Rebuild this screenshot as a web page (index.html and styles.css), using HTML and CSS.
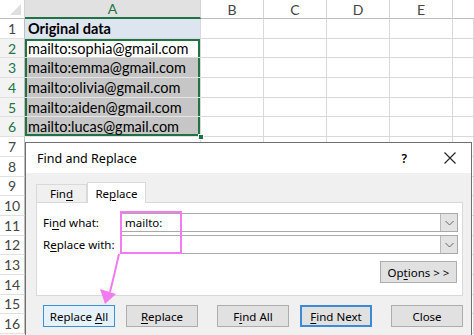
FILE: index.html
```html
<!DOCTYPE html>
<html>
<head>
<meta charset="utf-8">
<link rel="stylesheet" href="styles.css">
</head>
<body>
<div class="page">
  <div class="sheet">
    <div class="corner"><span class="tri"></span></div>
    <div class="ch ch-sel">A</div><div class="ch">B</div><div class="ch">C</div><div class="ch">D</div><div class="ch">E</div><div class="ch ch-last"></div>

    <div class="rh">1</div><div class="c c-a1"><b>Original data</b></div><div class="c"></div><div class="c"></div><div class="c"></div><div class="c"></div><div class="c"></div>
    <div class="rh rh-sel">2</div><div class="c c-txt s-top">mailto:sophia@gmail.com</div><div class="c"></div><div class="c"></div><div class="c"></div><div class="c"></div><div class="c"></div>
    <div class="rh rh-sel">3</div><div class="c c-txt c-gray s-mid">mailto:emma@gmail.com</div><div class="c"></div><div class="c"></div><div class="c"></div><div class="c"></div><div class="c"></div>
    <div class="rh rh-sel">4</div><div class="c c-txt c-gray s-mid">mailto:olivia@gmail.com</div><div class="c"></div><div class="c"></div><div class="c"></div><div class="c"></div><div class="c"></div>
    <div class="rh rh-sel">5</div><div class="c c-txt c-gray s-mid">mailto:aiden@gmail.com</div><div class="c"></div><div class="c"></div><div class="c"></div><div class="c"></div><div class="c"></div>
    <div class="rh rh-sel">6</div><div class="c c-txt c-gray s-bot">mailto:lucas@gmail.com<span class="handle"></span></div><div class="c"></div><div class="c"></div><div class="c"></div><div class="c"></div><div class="c"></div>
    <div class="rh">7</div><div class="c"></div><div class="c"></div><div class="c"></div><div class="c"></div><div class="c"></div><div class="c"></div>
    <div class="rh">8</div><div class="c"></div><div class="c"></div><div class="c"></div><div class="c"></div><div class="c"></div><div class="c"></div>
    <div class="rh">9</div><div class="c"></div><div class="c"></div><div class="c"></div><div class="c"></div><div class="c"></div><div class="c"></div>
    <div class="rh">10</div><div class="c"></div><div class="c"></div><div class="c"></div><div class="c"></div><div class="c"></div><div class="c"></div>
    <div class="rh">11</div><div class="c"></div><div class="c"></div><div class="c"></div><div class="c"></div><div class="c"></div><div class="c"></div>
    <div class="rh">12</div><div class="c"></div><div class="c"></div><div class="c"></div><div class="c"></div><div class="c"></div><div class="c"></div>
    <div class="rh">13</div><div class="c"></div><div class="c"></div><div class="c"></div><div class="c"></div><div class="c"></div><div class="c"></div>
    <div class="rh">14</div><div class="c"></div><div class="c"></div><div class="c"></div><div class="c"></div><div class="c"></div><div class="c"></div>
    <div class="rh">15</div><div class="c"></div><div class="c"></div><div class="c"></div><div class="c"></div><div class="c"></div><div class="c"></div>
    <div class="rh">16</div><div class="c"></div><div class="c"></div><div class="c"></div><div class="c"></div><div class="c"></div><div class="c"></div>
  </div>

  <div class="dialog">
    <div class="titlebar">
      <span class="title">Find and Replace</span>
      <span class="help">?</span>
      <svg class="close" width="12" height="12" viewBox="0 0 12 12"><path d="M0.5 0.5 L11.5 11.5 M11.5 0.5 L0.5 11.5" stroke="#222" stroke-width="1.1" fill="none"/></svg>
    </div>
    <div class="dbody">
      <div class="tabs">
        <div class="tab"><span>Fin<u>d</u></span></div>
        <div class="tab tab-active"><span>Re<u>p</u>lace</span></div>
      </div>
      <div class="panel">
        <div class="field">
          <span class="label">Fi<u>n</u>d what:</span>
          <div class="combo"><span class="val">mailto:</span><span class="drop"><svg width="9" height="6" viewBox="0 0 9 6"><path d="M0.5 1 L4.5 5 L8.5 1" stroke="#666" stroke-width="1" fill="none"/></svg></span></div>
        </div>
        <div class="field">
          <span class="label">R<u>e</u>place with:</span>
          <div class="combo"><span class="val"></span><span class="drop"><svg width="9" height="6" viewBox="0 0 9 6"><path d="M0.5 1 L4.5 5 L8.5 1" stroke="#666" stroke-width="1" fill="none"/></svg></span></div>
        </div>
        <div class="optrow"><span class="btn btn-opt"><span>Op<u>t</u>ions &gt; &gt;</span></span></div>
      </div>
      <div class="buttons">
        <span class="btn btn-hot"><span>Replace <u>A</u>ll</span></span>
        <span class="btn"><span><u>R</u>eplace</span></span>
        <span class="btn btn-gap"><span>F<u>i</u>nd All</span></span>
        <span class="btn btn-def"><span><u>F</u>ind Next</span></span>
        <span class="btn btn-gap"><span>Close</span></span>
      </div>
    </div>
  </div>

  <div class="highlight"></div>
  <svg class="arrow" width="474" height="335" viewBox="0 0 474 335">
    <path d="M119 254 Q115 272 110 292" stroke="#f07cf0" stroke-width="2" fill="none"/>
    <path d="M105 304 L100 289 L116 294 Z" fill="#f07cf0"/>
  </svg>
</div>
</body>
</html>
```

FILE: styles.css
```css
* { box-sizing: border-box; }
html, body { margin: 0; padding: 0; background: #fff; }
.page { position: relative; width: 474px; height: 335px; overflow: hidden; }

.sheet {
  display: grid;
  grid-template-columns: 25px 176px 63px 63px 63px 63px 21px;
  grid-template-rows: 19px repeat(16, 19.7px);
  font-family: "Lato", "Liberation Sans", sans-serif;
  font-size: 14.5px;
  color: #000;
}
.corner { position: relative; background: #fff; border-right: 1px solid #d4d4d4; border-bottom: 1px solid #bdbdbd; }
.tri { position: absolute; right: 3px; bottom: 3px; width: 0; height: 0; border-left: 11px solid transparent; border-bottom: 11px solid #dfdfdf; }
.ch {
  display: flex; align-items: center; justify-content: center;
  background: #fff; color: #444;
  border-right: 1px solid #d4d4d4; border-bottom: 1px solid #bdbdbd;
  font-size: 14px;
}
.ch-sel { background: #e1e1e1; color: #217346; border-bottom: 2px solid #217346; }
.ch-last { border-right: none; }
.rh {
  display: flex; align-items: center; justify-content: center;
  background: #fff; color: #444; font-size: 14px;
  border-right: 1px solid #bdbdbd; border-bottom: 1px solid #e0e0e0;
}
.rh-sel { color: #217346; background: #f3f3f3; }
.c { position: relative; border-right: 1px solid #d9d9d9; border-bottom: 1px solid #d9d9d9; display: flex; align-items: center; padding-left: 3px; white-space: nowrap; }
.c-a1 { background: #dde5f0; }
.c-a1 b { font-weight: 700; }
.c-gray { background: #c6c6c6; border-bottom-color: #e4e4e4; }

.s-top { box-shadow: inset 2px 0 #217346, inset -2px 0 #217346, inset 0 2px #217346; }
.s-mid { box-shadow: inset 2px 0 #217346, inset -2px 0 #217346; }
.s-bot { box-shadow: inset 2px 0 #217346, inset -2px 0 #217346, inset 0 -2px #217346; z-index: 2; }
.handle { position: absolute; right: -4px; bottom: -4px; width: 6px; height: 6px; background: #217346; border: 1px solid #fff; z-index: 3; }

.dialog {
  position: absolute; left: 25px; top: 142px; width: 447px; height: 200px;
  background: #f0f0f0;
  border: 1px solid #6f6f6f;
  font-family: "Noto Sans", "Open Sans", sans-serif;
  font-size: 11.5px; color: #000;
  z-index: 5;
}
.titlebar { height: 30px; background: #fff; display: flex; align-items: center; padding-left: 11px; }
.title { font-size: 12.5px; flex: 1; }
.help { font-size: 12px; font-weight: 600; margin-right: 37px; }
.close { margin-right: 15px; }
.dbody { padding: 9px 8px 0 10px; }
.tabs { display: flex; align-items: flex-end; height: 20px; }
.tab {
  height: 18px; width: 51px; display: flex; align-items: center; justify-content: center;
  background: #f0f0f0; border: 1px solid #d9d9d9; border-bottom: none;
}
.tab-active { height: 21px; width: 59px; background: #fff; margin-bottom: -1px; position: relative; z-index: 1; }
.panel {
  width: 427px; height: 94px; background: #fff; border: 1px solid #d9d9d9;
  padding: 10px 4px 0 6px;
}
.field { display: flex; align-items: center; height: 19px; margin-bottom: 3px; }
.label { width: 77px; }
.combo {
  flex: 1; height: 19px; border: 1px solid #a9a9a9; display: flex; align-items: stretch;
}
.val { flex: 1; padding-left: 4px; display: flex; align-items: center; }
.drop { width: 17px; background: #e3e3e3; border-left: 1px solid #b9b9b9; display: flex; align-items: center; justify-content: center; }
.optrow { display: flex; justify-content: flex-end; margin-top: 7px; padding-right: 1px; }
.btn {
  display: inline-flex; align-items: center; justify-content: center;
  height: 22px; width: 73px; background: #e1e1e1; border: 1px solid #adadad;
  white-space: nowrap;
}
.btn-opt { width: 77px; }
.buttons { display: flex; margin-top: 9px; padding-left: 7px; gap: 11px; }
.btn-gap { margin-left: 8px; }
.btn-hot { background: #e5f1fb; border-color: #3c90d8; }
.btn-def { border: 2px solid #3d8ad6; }
u { text-decoration: underline; text-underline-offset: 2px; }

.highlight { position: absolute; left: 120px; top: 211px; width: 62px; height: 43px; border: 2px solid #f27af2; z-index: 6; }
.arrow { position: absolute; left: 0; top: 0; pointer-events: none; z-index: 6; }
```
